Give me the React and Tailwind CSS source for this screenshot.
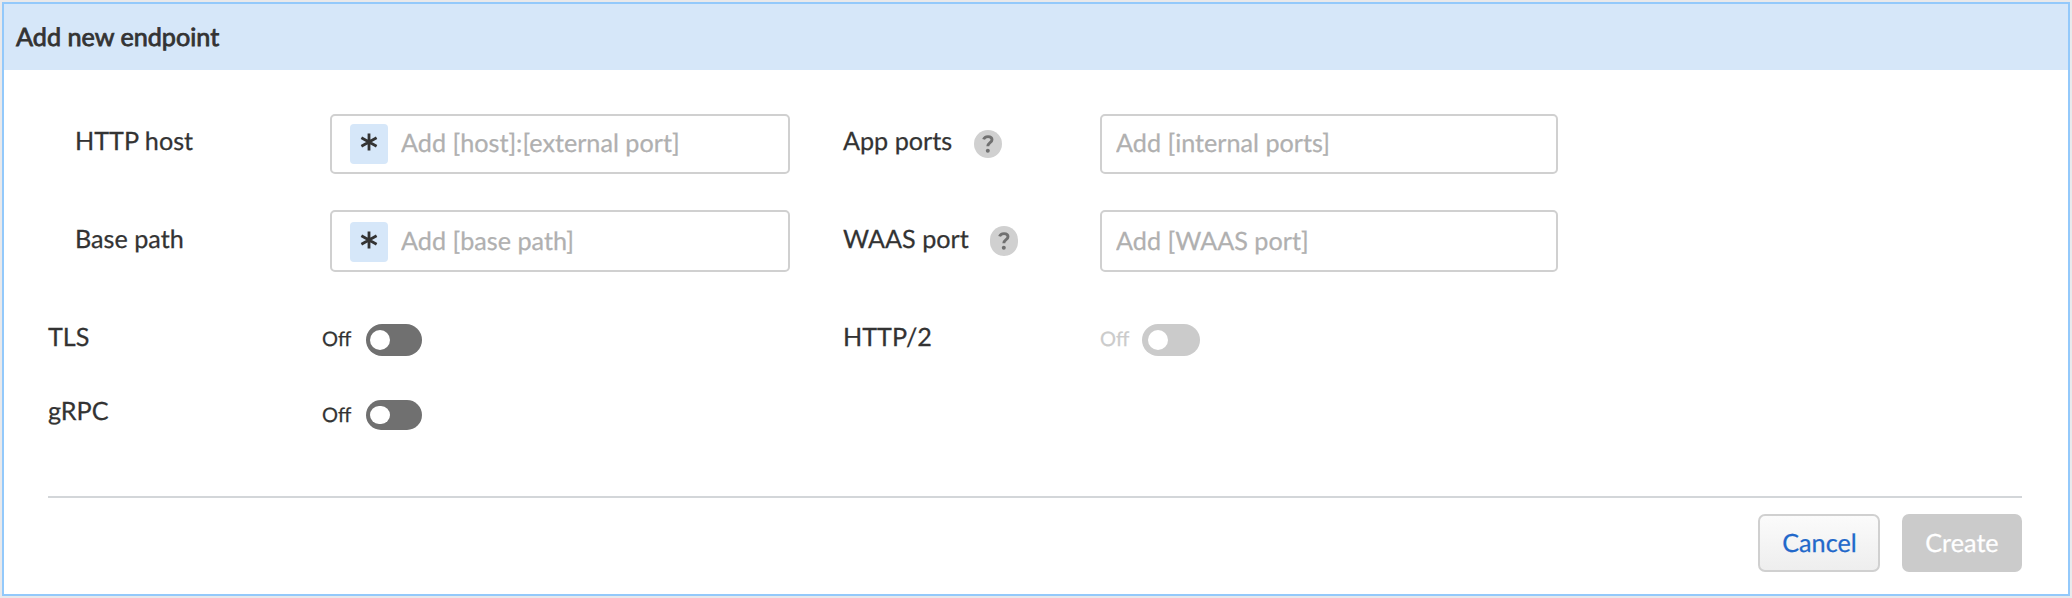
const controls = "rounded-[5px] border-2 border-[#d0d0d0] bg-white";

function Field({ placeholder, className, badge }) {
  return (
    <div className={`flex shrink-0 items-center ${controls} ${className}`}>
      {badge && (
        <span className="mr-[13px] flex h-10 w-[38px] shrink-0 items-center justify-center rounded-[4px] bg-[#d6e7f9]">
          <svg viewBox="0 0 18 18" className="-mt-1 size-[18px]" stroke="#333333" strokeWidth="2.8" fill="none">
            <path d="M9 .5v17M1.4 4.8l15.2 8.4M16.6 4.8L1.4 13.2" />
          </svg>
        </span>
      )}
      <input
        placeholder={placeholder}
        className="mb-[3px] h-8 min-w-0 flex-1 bg-transparent leading-8 outline-none [text-rendering:geometricPrecision] placeholder:text-[#b0b0b0] placeholder:opacity-100"
      />
    </div>
  );
}

function Help({ className }) {
  return (
    <span className={`flex w-7 shrink-0 items-center justify-center rounded-full bg-[#d0d0d0] ${className}`}>
      <svg viewBox="0 0 12 18" className="h-[18px] w-3" fill="none" stroke="#707070" strokeWidth="2.9">
        <path d="M1.6 4.4C2.2 2.5 3.9 1.6 6 1.6c2.4 0 4 1.2 4 3.1 0 3-4.2 2.9-4.2 6.6" />
        <circle cx="5.8" cy="15.8" r="2" fill="#707070" stroke="none" />
      </svg>
    </span>
  );
}

function Toggle({ track, knob, text = "text-[#333333]", gap = "gap-[14px]", offset }) {
  return (
    <div className={`flex items-start ${gap}`}>
      <span className={`w-[30px] shrink-0 text-[20px] leading-6 whitespace-nowrap ${text} ${offset}`}>Off</span>
      <button className={`flex shrink-0 items-center rounded-full ${track}`}>
        <span className={`w-5 rounded-full bg-white ${knob}`} />
      </button>
    </div>
  );
}

export default function App() {
  return (
    <div className="h-[598px] w-[2072px] bg-[#e9e9eb] p-0.5 font-['Lato',sans-serif] text-[25.2px] leading-8 text-[#333333] [-webkit-text-stroke:0.25px_currentColor] [text-rendering:geometricPrecision]">
      <section className="flex h-full w-full flex-col border-2 border-[#93c9fb] bg-white">
        <header className="h-[66px] shrink-0 bg-[#d6e7f9] pt-[17px] pl-3 [-webkit-text-stroke:0.8px_currentColor]">
          Add new endpoint
        </header>

        <div className="pt-11 pl-11">
          <div className="flex h-[60px] items-start">
            <label className="w-[282px] pt-[11px] pl-[27px]">HTTP host</label>
            <Field badge placeholder="Add [host]:[external port]" className="h-[60px] w-[460px] pl-[18px]" />
            <div className="ml-[53px] flex w-[257px] items-start">
              <label className="w-[110px] pt-[11px] whitespace-nowrap">App ports</label>
              <Help className="mt-4 ml-[21px] h-7" />
            </div>
            <Field placeholder="Add [internal ports]" className="h-[60px] w-[458px] pl-3.5" />
          </div>

          <div className="mt-9 flex h-[62px] items-start">
            <label className="w-[282px] pt-[13px] pl-[27px]">Base path</label>
            <Field badge placeholder="Add [base path]" className="h-[62px] w-[460px] pt-0.5 pl-[18px]" />
            <div className="ml-[53px] flex w-[257px] items-start">
              <label className="w-[126px] pt-[13px] whitespace-nowrap">WAAS port</label>
              <Help className="mt-4 ml-[21px] h-[30px]" />
            </div>
            <Field placeholder="Add [WAAS port]" className="h-[62px] w-[458px] pt-0.5 pl-3.5" />
          </div>

          <div className="mt-12 flex h-[74px] items-start">
            <span className="w-[274px] pt-px">TLS</span>
            <div className="w-[521px] pt-1">
              <Toggle track="h-8 w-14 bg-[#707070] pl-1" knob="h-5" offset="mt-[3px]" />
            </div>
            <span className="w-[257px] pt-px">HTTP/2</span>
            <div className="pt-1">
              <Toggle
                track="h-8 w-[58px] bg-[#cbcbcb] pl-1.5"
                knob="h-5"
                text="text-[#cbcbcb]"
                gap="gap-3"
                offset="mt-[3px]"
              />
            </div>
          </div>

          <div className="flex h-[102px] items-start">
            <span className="w-[274px] pt-px">gRPC</span>
            <div className="pt-1.5">
              <Toggle track="h-[30px] w-14 bg-[#707070] pl-1" knob="h-[18px]" offset="mt-[3px]" />
            </div>
          </div>
        </div>

        <footer className="mr-[46px] ml-11 flex justify-end gap-[22px] border-t-2 border-[#d3d6d9] pt-4">
          <button className="h-[58px] w-[122px] rounded-[7px] border-2 border-[#d0d0d0] bg-linear-to-b from-[#fbfbfb] to-[#eeeeee] pb-px pl-px text-[#2268ca] [text-rendering:geometricPrecision]">
            Cancel
          </button>
          <button className="h-[58px] w-[120px] rounded-[7px] bg-[#cbcbcb] pb-px text-white [text-rendering:geometricPrecision]">
            Create
          </button>
        </footer>
      </section>
    </div>
  );
}
